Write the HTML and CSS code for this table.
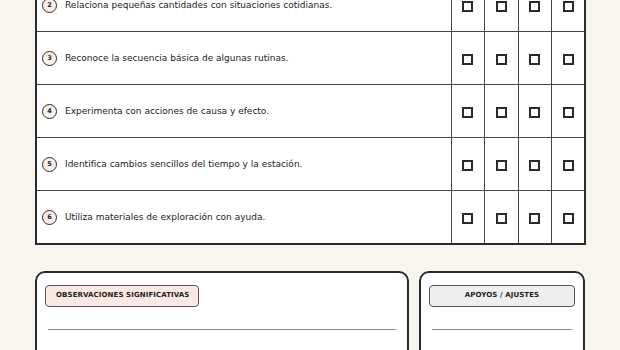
FILE: index.html
```html
<!DOCTYPE html>
<html lang="es">
<head>
<meta charset="utf-8">
<link rel="stylesheet" href="styles.css">
</head>
<body>
<div class="page">
  <table class="grid">
    <colgroup>
      <col class="c-item">
      <col class="c-chk"><col class="c-chk"><col class="c-chk"><col class="c-chk">
    </colgroup>
    <tbody>
      <tr>
        <td class="item"><span class="num">2</span>Relaciona pequeñas cantidades con situaciones cotidianas.</td>
        <td class="chk"><span class="box"></span></td><td class="chk"><span class="box"></span></td><td class="chk"><span class="box"></span></td><td class="chk"><span class="box"></span></td>
      </tr>
      <tr>
        <td class="item"><span class="num">3</span>Reconoce la secuencia básica de algunas rutinas.</td>
        <td class="chk"><span class="box"></span></td><td class="chk"><span class="box"></span></td><td class="chk"><span class="box"></span></td><td class="chk"><span class="box"></span></td>
      </tr>
      <tr>
        <td class="item"><span class="num">4</span>Experimenta con acciones de causa y efecto.</td>
        <td class="chk"><span class="box"></span></td><td class="chk"><span class="box"></span></td><td class="chk"><span class="box"></span></td><td class="chk"><span class="box"></span></td>
      </tr>
      <tr>
        <td class="item"><span class="num">5</span>Identifica cambios sencillos del tiempo y la estación.</td>
        <td class="chk"><span class="box"></span></td><td class="chk"><span class="box"></span></td><td class="chk"><span class="box"></span></td><td class="chk"><span class="box"></span></td>
      </tr>
      <tr>
        <td class="item"><span class="num">6</span>Utiliza materiales de exploración con ayuda.</td>
        <td class="chk"><span class="box"></span></td><td class="chk"><span class="box"></span></td><td class="chk"><span class="box"></span></td><td class="chk"><span class="box"></span></td>
      </tr>
    </tbody>
  </table>

  <div class="cards">
    <section class="card wide">
      <div class="pill pink">OBSERVACIONES SIGNIFICATIVAS</div>
      <div class="line"></div>
      <div class="line"></div>
    </section>
    <section class="card narrow">
      <div class="pill gray center">APOYOS / AJUSTES</div>
      <div class="line"></div>
      <div class="line"></div>
    </section>
  </div>
</div>
</body>
</html>
```

FILE: styles.css
```css
html, body {
  margin: 0;
  padding: 0;
  background: #f8f4ee;
  font-family: "DejaVu Sans", Verdana, sans-serif;
  color: #222;
  overflow: hidden;
}

.page {
  padding: 0 35px;
}

.grid {
  width: 550px;
  border-collapse: collapse;
  table-layout: fixed;
  background: #fff;
  border: 2px solid #2b2b2b;
  margin-top: -23px;
}

.c-item { width: 415px; }
.c-chk { width: 33.5px; }

.grid td {
  height: 52px;
  border-bottom: 1px solid #444;
  padding: 0;
  vertical-align: middle;
}

.grid tr:last-child td { border-bottom: none; }

.item {
  font-size: 9px;
  padding-left: 5px !important;
  white-space: nowrap;
}

.num {
  display: inline-flex;
  align-items: center;
  justify-content: center;
  width: 13px;
  height: 13px;
  border: 1.5px solid #2b2b2b;
  border-radius: 50%;
  background: #fbefe9;
  font-size: 6.5px;
  font-weight: bold;
  margin-right: 8px;
  vertical-align: middle;
}

.chk {
  border-left: 1px solid #444;
  text-align: center;
}

.box {
  display: inline-block;
  width: 7px;
  height: 7px;
  border: 2px solid #2b2b2b;
  vertical-align: middle;
}

.cards {
  display: flex;
  gap: 10px;
  margin-top: 26px;
}

.card {
  background: #fff;
  border: 2px solid #2b2b2b;
  border-radius: 10px;
  padding: 12px 8px;
  height: 120px;
  flex: none;
}

.wide { width: 354px; }
.narrow { width: 146px; }

.pill {
  display: block;
  box-sizing: border-box;
  height: 22px;
  line-height: 19px;
  padding: 0 10px;
  border: 1.5px solid #555;
  border-radius: 4px;
  font-size: 7px;
  font-weight: bold;
  letter-spacing: 0.1px;
  color: #222;
  white-space: nowrap;
}

.pink { background: #f9e9e2; width: 154px; }
.gray { background: #eeeeee; width: 146px; }
.center { text-align: center; }

.line {
  height: 1px;
  background: #8a8a8a;
  margin: 22px 3px 0;
}
```
